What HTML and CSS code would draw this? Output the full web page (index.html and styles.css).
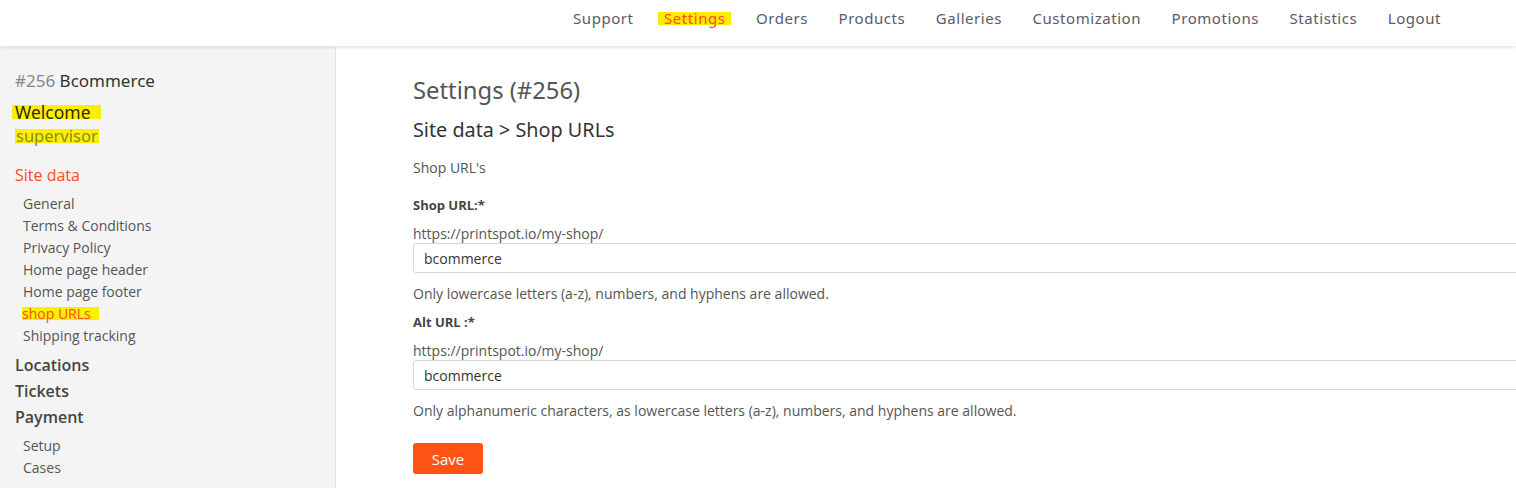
FILE: index.html
```html
<!DOCTYPE html>
<html>
<head>
<meta charset="utf-8">
<link rel="stylesheet" href="styles.css">
</head>
<body>
<header class="topbar">
  <nav class="nav">
    <a class="nav-item">Support</a>
    <a class="nav-item active"><span class="mark">Settings</span></a>
    <a class="nav-item">Orders</a>
    <a class="nav-item">Products</a>
    <a class="nav-item">Galleries</a>
    <a class="nav-item">Customization</a>
    <a class="nav-item">Promotions</a>
    <a class="nav-item">Statistics</a>
    <a class="nav-item">Logout</a>
  </nav>
</header>
<div class="layout">
  <aside class="sidebar">
    <div class="brand"><span class="brand-id">#256</span> Bcommerce</div>
    <div class="welcome"><span class="hl hl-welcome">Welcome</span></div>
    <div class="user"><span class="hl hl-user">supervisor</span></div>
    <div class="section active-section">Site data</div>
    <ul class="sub">
      <li>General</li>
      <li>Terms &amp; Conditions</li>
      <li>Privacy Policy</li>
      <li>Home page header</li>
      <li>Home page footer</li>
      <li class="current"><span class="hl hl-item">shop URLs</span></li>
      <li>Shipping tracking</li>
    </ul>
    <div class="section first">Locations</div>
    <div class="section">Tickets</div>
    <div class="section">Payment</div>
    <ul class="sub sub-pay">
      <li>Setup</li>
      <li>Cases</li>
    </ul>
  </aside>
  <main class="main">
    <h1 class="title">Settings (#256)</h1>
    <h2 class="subtitle">Site data &gt; Shop URLs</h2>
    <p class="intro">Shop URL's</p>
    <form class="form">
      <div class="field">
        <label class="label">Shop URL:*</label>
        <div class="prefix">https://printspot.io/my-shop/</div>
        <input class="input" type="text" value="bcommerce">
        <p class="help">Only lowercase letters (a-z), numbers, and hyphens are allowed.</p>
      </div>
      <div class="field field-alt">
        <label class="label">Alt URL :*</label>
        <div class="prefix">https://printspot.io/my-shop/</div>
        <input class="input" type="text" value="bcommerce">
        <p class="help">Only alphanumeric characters, as lowercase letters (a-z), numbers, and hyphens are allowed.</p>
      </div>
      <button class="save" type="button">Save</button>
    </form>
  </main>
</div>
</body>
</html>
```
FILE: styles.css
```css
* { box-sizing: border-box; }
html, body { margin: 0; padding: 0; height: 100%; overflow: hidden; }
body {
  font-family: "Open Sans", "Liberation Sans", sans-serif;
  color: #555;
  background: #fff;
}
.topbar {
  height: 46px;
  background: #fff;
  box-shadow: 0 1px 3px rgba(0,0,0,0.16);
  position: relative;
  z-index: 2;
  display: flex;
  justify-content: flex-end;
  align-items: flex-start;
  padding: 8px 75px 0 0;
}
.nav { display: flex; gap: 30.5px; align-items: center; }
.nav-item {
  font-family: "Noto Sans", "Open Sans", sans-serif;
  font-size: 15px;
  color: #5a5a68;
  line-height: 20px;
  letter-spacing: 0.55px;
}
.nav-item.active { color: #ff4b1f; }
.mark {
  background: #ffeb00;
  padding: 0 5px 0 6px;
  margin: 0 -5px 0 -6px;
  display: inline-block;
  line-height: 13px;
  height: 13px;
}
.layout { display: flex; height: calc(100% - 46px); margin-top: 1px; }
.sidebar {
  width: 336px;
  flex: none;
  background: #f4f4f4;
  border-right: 1px solid #e6e6e6;
  padding: 22px 15px 0 15px;
}
.brand {
  font-family: "Noto Sans", sans-serif;
  font-size: 17px;
  line-height: 24px;
  color: #333;
}
.brand-id { color: #888; }
.welcome {
  margin-top: 8px;
  font-family: "Noto Sans", sans-serif;
  font-size: 17.5px;
  line-height: 22px;
  color: #2d2d00;
}
.hl { background: #ffee00; display: inline-block; }
.hl-welcome { margin-left: -3px; padding: 0 10px 0 3px; height: 14px; line-height: 14px; }
.user {
  margin-top: 3px;
  font-family: "Noto Sans", sans-serif;
  font-size: 16.5px;
  line-height: 20px;
  color: #8a8a2a;
}
.hl-user { margin-left: 0; height: 14px; line-height: 14px; padding: 0 1px 0 1px; }
.section {
  font-size: 16px;
  line-height: 24px;
  font-weight: 600;
  color: #444;
}
.active-section { margin-top: 17px; color: #ff4b1f; font-weight: 500; }
.section.first { margin-top: 6px; }
.section + .section { margin-top: 2px; }
.sub { list-style: none; margin: 6px 0 0 8px; padding: 0; }
.sub li { font-size: 14px; line-height: 22px; color: #555; }
.sub .current { color: #ff4b1f; }
.hl-item { height: 13px; line-height: 13px; padding: 0 8px 0 0; margin-left: -1px; }
.sub-pay { margin-top: 6px; }
.main {
  flex: 1;
  padding: 28px 0 0 77px;
  margin-right: -30px;
}
.title {
  margin: 0;
  font-family: "Noto Sans", sans-serif;
  font-weight: 400;
  font-size: 23.8px;
  line-height: 30px;
  color: #555;
}
.subtitle {
  margin: 13px 0 0 0;
  font-family: "Noto Sans", sans-serif;
  font-weight: 400;
  font-size: 19.8px;
  line-height: 24px;
  color: #333;
}
.intro { margin: 16px 0 0; font-size: 14px; line-height: 20px; color: #555; }
.form { margin-top: 17px; }
.label { display: block; font-size: 13px; line-height: 20px; font-weight: 700; color: #444; }
.prefix { margin-top: 10px; font-size: 14px; line-height: 18px; color: #555; }
.input {
  display: block;
  width: 100%;
  height: 30px;
  margin: 0;
  border: 1px solid #d9d9d9;
  border-radius: 3px;
  padding: 0 10px;
  font-family: "Open Sans", sans-serif;
  font-size: 14px;
  color: #333;
  background: #fff;
}
.help { margin: 11px 0 0; font-size: 14px; line-height: 20px; color: #555; }
.field-alt { margin-top: 8px; }
.save {
  margin-top: 22px;
  width: 70px;
  height: 31px;
  border: 0;
  border-radius: 3px;
  background: #ff5316;
  color: #fff;
  font-family: "Open Sans", sans-serif;
  font-size: 15px;
}
```
